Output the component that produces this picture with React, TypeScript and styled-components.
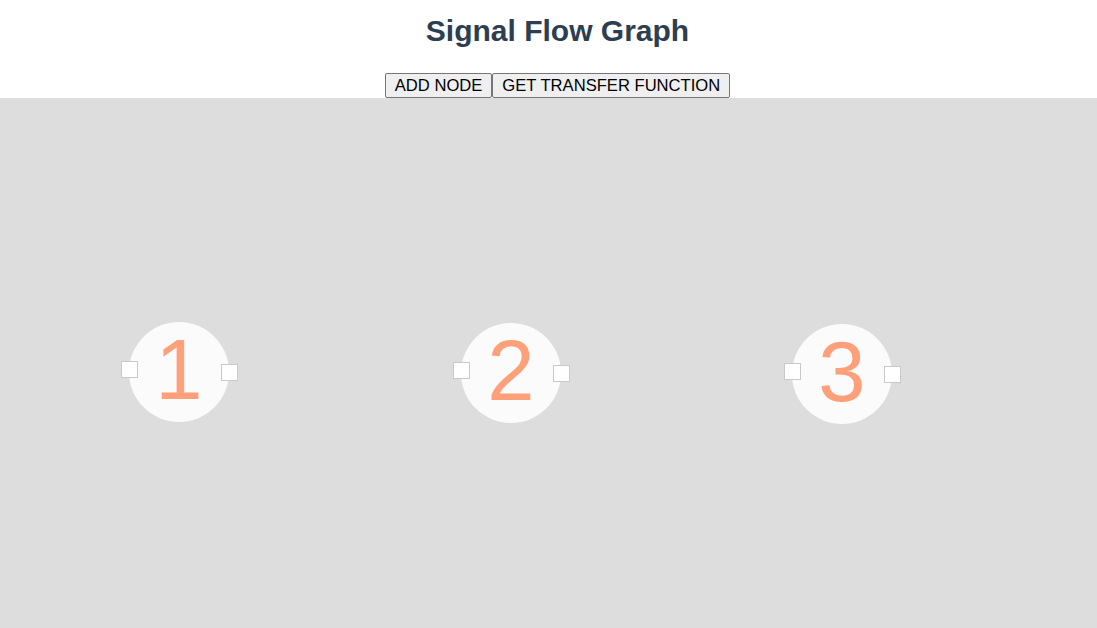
import React from "react";
import styled, { createGlobalStyle } from "styled-components";

const GlobalStyle = createGlobalStyle`
  html, body {
    margin: 0;
    padding: 0;
    background: #ffffff;
  }
  body {
    font-family: "Liberation Sans", Arial, sans-serif;
  }
`;

const Page = styled.div`
  display: flex;
  flex-direction: column;
  height: 100vh;
  text-align: center;
  color: #2c3e50;
`;

const Header = styled.header`
  display: flex;
  flex-direction: column;
  align-items: center;
  padding: 14px 0 0 18px;
`;

const Title = styled.h1`
  margin: 0 0 25px;
  font-size: 30px;
  line-height: 34px;
  font-weight: 700;
  color: #2c3e50;
`;

const Toolbar = styled.div`
  display: flex;
  justify-content: center;
`;

const Button = styled.button`
  box-sizing: border-box;
  height: 25px;
  padding: 2px 9px 0;
  margin: 0;
  border: 1px solid #767676;
  border-radius: 2px;
  background: #efefef;
  color: #000000;
  font-family: "Liberation Sans", Arial, sans-serif;
  font-size: 16.6px;
  line-height: 1;
  cursor: pointer;
`;

const Canvas = styled.main`
  position: relative;
  flex: 1;
  background: #dddddd;
  overflow: hidden;
`;

const Node = styled.div<{ $x: number; $y: number }>`
  position: absolute;
  left: ${(p) => p.$x}px;
  top: ${(p) => p.$y}px;
  width: 100px;
  height: 100px;
`;

const Circle = styled.div`
  box-sizing: border-box;
  width: 100px;
  height: 100px;
  border-radius: 50%;
  background: #fbfbfb;
  display: flex;
  align-items: center;
  justify-content: center;
  padding-bottom: 4px;
`;

const Label = styled.span`
  font-family: "Liberation Sans", Arial, sans-serif;
  font-size: 85px;
  line-height: 96px;
  color: #ffa07a;
  user-select: none;
`;

const Port = styled.div<{ $side: "in" | "out" }>`
  position: absolute;
  box-sizing: border-box;
  width: 17px;
  height: 17px;
  background: #ffffff;
  border: 1px solid #c9c9c9;
  left: ${(p) => (p.$side === "in" ? -8 : 92)}px;
  top: ${(p) => (p.$side === "in" ? 39 : 42)}px;
`;

const nodes = [
  { id: 1, x: 129, y: 224 },
  { id: 2, x: 461, y: 225 },
  { id: 3, x: 792, y: 226 },
];

export default function App() {
  return (
    <>
      <GlobalStyle />
      <Page>
        <Header>
          <Title>Signal Flow Graph</Title>
          <Toolbar>
            <Button>ADD NODE</Button>
            <Button>GET TRANSFER FUNCTION</Button>
          </Toolbar>
        </Header>
        <Canvas>
          {nodes.map((n) => (
            <Node key={n.id} $x={n.x} $y={n.y}>
              <Circle>
                <Label>{n.id}</Label>
              </Circle>
              <Port $side="in" />
              <Port $side="out" />
            </Node>
          ))}
        </Canvas>
      </Page>
    </>
  );
}
